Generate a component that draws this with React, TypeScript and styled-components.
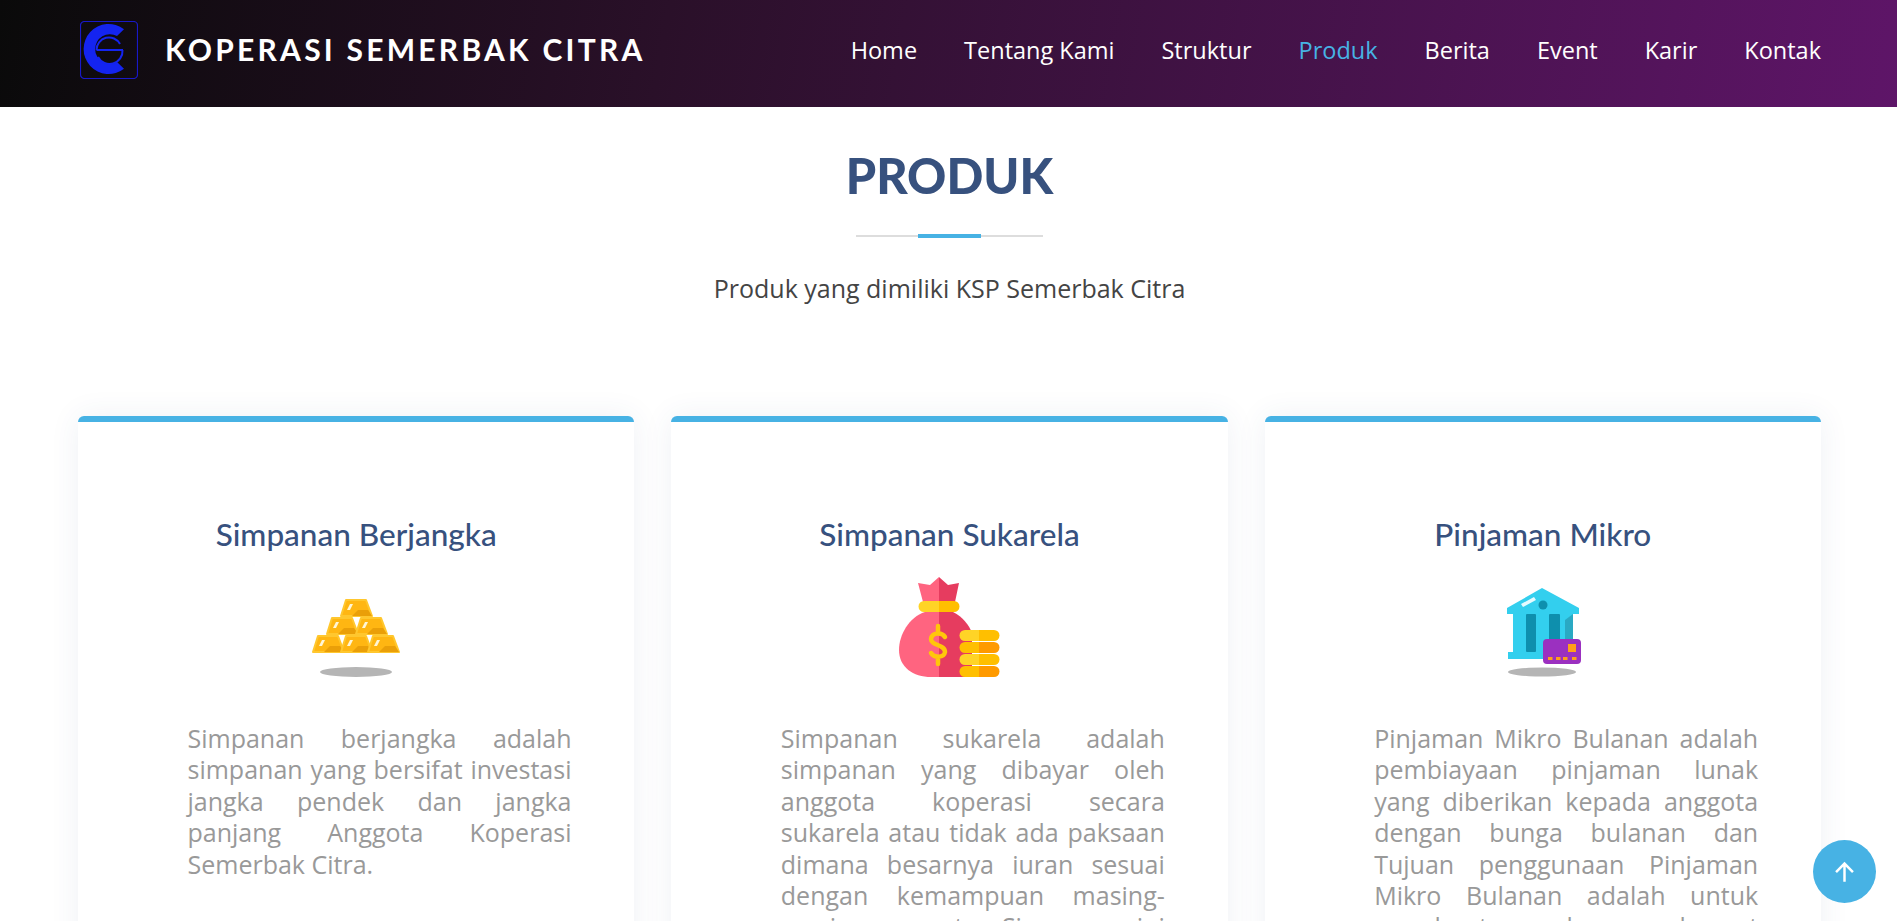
import React from 'react'
import styled, { createGlobalStyle } from 'styled-components'

const GlobalStyle = createGlobalStyle`
  html, body {
    margin: 0;
    padding: 0;
    height: 100%;
    overflow: hidden;
    background: #fff;
    font-family: "Open Sans", "Noto Sans", sans-serif;
  }
  * { box-sizing: border-box; }
`

const Header = styled.header`
  height: 107px;
  padding: 0 76px 8px 80px;
  display: flex;
  align-items: center;
  justify-content: space-between;
  background: linear-gradient(100deg, #0a0a0a 0%, #2a1029 35%, #5e1568 100%);
`

const Brand = styled.a`
  display: flex;
  align-items: center;
  gap: 27px;
`

const BrandName = styled.span`
  font-family: "Lato", sans-serif;
  font-size: 30px;
  line-height: 38px;
  font-weight: 700;
  letter-spacing: 3.25px;
  color: #fff;
  margin-top: -2px;
`

const Nav = styled.nav`
  display: flex;
  gap: 47px;
`

const NavLink = styled.a<{ $active?: boolean }>`
  font-size: 23.5px;
  font-weight: 400;
  color: ${p => (p.$active ? '#47b2e4' : '#fff')};
`

const Section = styled.section`
  padding: 38px 76px 0 78px;
`

const SectionTitle = styled.div`
  display: flex;
  flex-direction: column;
  align-items: center;
`

const Heading = styled.h2`
  margin: 0;
  font-family: "Lato", sans-serif;
  font-size: 48.5px;
  line-height: 60px;
  font-weight: 900;
  color: #37517e;
`

const Divider = styled.div`
  position: relative;
  width: 187px;
  height: 2px;
  margin-top: 30px;
  background: #ddd;

  &::after {
    content: '';
    position: absolute;
    left: 62px;
    top: -1px;
    width: 63px;
    height: 4px;
    background: #47b2e4;
  }
`

const Subtitle = styled.p`
  margin: 33px 0 0;
  font-size: 25px;
  line-height: 36px;
  color: #444;
`

const Grid = styled.div`
  display: grid;
  grid-template-columns: repeat(3, minmax(0, 1fr));
  gap: 37px;
  margin-top: 110px;
`

const Card = styled.article`
  display: flex;
  flex-direction: column;
  align-items: center;
  height: 640px;
  padding-top: 92px;
  background: #fff;
  border-top: 6px solid #47b2e4;
  border-radius: 6px;
  box-shadow: 0 0 30px rgba(55, 81, 126, 0.08);
`

const CardTitle = styled.h4`
  margin: 0;
  font-family: "Lato", sans-serif;
  font-size: 31.5px;
  line-height: 40px;
  font-weight: 500;
  color: #37517e;
  white-space: nowrap;
`

const IconWrap = styled.div`
  width: 130px;
  height: 115px;
  margin-top: 11px;
`

const CardText = styled.p`
  align-self: flex-start;
  width: 384px;
  margin: 43px 0 0 109.5px;
  font-size: 25px;
  line-height: 31.4px;
  text-align: justify;
  color: #999;
`

const BackToTop = styled.a`
  position: fixed;
  right: 21px;
  bottom: 18px;
  width: 63px;
  height: 63px;
  border-radius: 50%;
  display: flex;
  align-items: center;
  justify-content: center;
  background: #47b2e4;
`

const Logo = () => (
  <svg width="58" height="58" viewBox="0 0 58 58" fill="none">
    <rect x="0.5" y="0.5" width="57" height="57" rx="4" stroke="#1919c8" strokeWidth="1.2" />
    <path d="M44 8.3A25 25 0 1 0 44 47.7L37 41A14.8 14.8 0 1 1 37 15Z" fill="#1424f0" />
    <path d="M16.5 29H43M40 23A12.5 12.5 0 0 0 16.5 29M42.5 29A13 13 0 0 1 18 36" stroke="#1424f0" strokeWidth="2" />
  </svg>
)

const goldBars = [
  [50, 29],
  [36, 47],
  [65, 47],
  [22, 65],
  [50, 65],
  [77, 65],
]

const GoldIcon = () => (
  <svg width="130" height="115" viewBox="1 -5 130 115">
    <ellipse cx="66" cy="102" rx="36" ry="5" fill="#b5b5b5" />
    {goldBars.map(([x, y]) => (
      <g key={`${x}-${y}`}>
        <path d={`M${x + 6} ${y + 1}H${x + 26}L${x + 32} ${y + 17}H${x + 1}Z`} fill="#ffb612" stroke="#ffc72e" strokeWidth="2" strokeLinejoin="round" />
        <path d={`M${x + 12} ${y + 17}L${x + 18} ${y + 11}H${x + 28}L${x + 32} ${y + 17}Z`} fill="#ea9f08" />
        <path d={`M${x + 7} ${y + 11}L${x + 10} ${y + 5}H${x + 13}L${x + 10} ${y + 11}Z`} fill="#fff6d6" />
      </g>
    ))}
  </svg>
)

const BagIcon = () => (
  <svg width="130" height="115" viewBox="3 0 130 115">
    <path d="M58 47H44C28 52 18 70 18 85C18 102 32 112 50 112H58Z" fill="#ff6480" />
    <path d="M58 47H72C82 52 88 60 91 68V112H58Z" fill="#e63c5f" />
    <path d="M37 18L49 20L58 12V37H42Z" fill="#ff6480" />
    <path d="M78 18L67 20L58 12V37H74Z" fill="#e63c5f" />
    <path d="M43 36H58V47H43A5.5 5.5 0 0 1 43 36Z" fill="#ffd426" />
    <path d="M58 36H73A5.5 5.5 0 0 1 73 47H58Z" fill="#ffbf00" />
    <path d="M57 61V67M57 93V99M64 72C61 67 51 67 50 74C50 81 64 79 64 87C63 93 53 93 50 88" fill="none" stroke="#ffc60a" strokeWidth="4.5" strokeLinecap="round" />
    {[65, 77, 89, 101].map((y, i) => (
      <g key={y}>
        <path d={`M84 ${y}H98V${y + 11}H84A5.5 5.5 0 0 1 84 ${y}Z`} fill={i % 2 ? '#ffbf00' : '#ffd426'} />
        <path d={`M98 ${y}H113A5.5 5.5 0 0 1 113 ${y + 11}H98Z`} fill={i % 2 ? '#ff9a00' : '#ffbf00'} />
      </g>
    ))}
  </svg>
)

const BankIcon = () => (
  <svg width="130" height="115" viewBox="-2 -10 130 115">
    <ellipse cx="62" cy="97" rx="34" ry="4.5" fill="#b5b5b5" />
    <path d="M27 33L62 13L99 33V39H93V77H99V84H28V77H33V39H27Z" fill="#33cfee" strokeLinejoin="round" />
    <path d="M85 45L93 39V64H85Z" fill="#2aa9c3" />
    <path d="M41 29L54 22L56 25L43 32Z" fill="#e5fbff" />
    <circle cx="63" cy="30" r="4.5" fill="#0e8fad" />
    <rect x="46" y="39" width="10" height="38" rx="1" fill="#0e8fad" />
    <rect x="69" y="39" width="11" height="38" rx="1" fill="#0e8fad" />
    <rect x="63" y="64" width="38" height="25" rx="4" fill="#9b30c0" />
    <rect x="88" y="69" width="8" height="8" fill="#ff9f1a" />
    {[68, 76, 83, 92].map(x => (
      <rect key={x} x={x} y="82" width="4.5" height="3" fill="#ff9f1a" />
    ))}
  </svg>
)

const products = [
  {
    title: 'Simpanan Berjangka',
    icon: <GoldIcon />,
    text: 'Simpanan berjangka adalah simpanan yang bersifat investasi jangka pendek dan jangka panjang Anggota Koperasi Semerbak Citra.',
  },
  {
    title: 'Simpanan Sukarela',
    icon: <BagIcon />,
    text: 'Simpanan sukarela adalah simpanan yang dibayar oleh anggota koperasi secara sukarela atau tidak ada paksaan dimana besarnya iuran sesuai dengan kemampuan masing-masing anggota. Simpanan ini dapat diambil sewaktu-waktu oleh anggota koperasi.',
  },
  {
    title: 'Pinjaman Mikro',
    icon: <BankIcon />,
    text: 'Pinjaman Mikro Bulanan adalah pembiayaan pinjaman lunak yang diberikan kepada anggota dengan bunga bulanan dan Tujuan penggunaan Pinjaman Mikro Bulanan adalah untuk membantu dana darurat anggota koperasi yang membutuhkan.',
  },
]

const navItems = ['Home', 'Tentang Kami', 'Struktur', 'Produk', 'Berita', 'Event', 'Karir', 'Kontak']

const App = () => {
  return (
    <>
      <GlobalStyle />
      <Header>
        <Brand>
          <Logo />
          <BrandName>KOPERASI SEMERBAK CITRA</BrandName>
        </Brand>
        <Nav>
          {navItems.map(item => (
            <NavLink key={item} $active={item === 'Produk'}>
              {item}
            </NavLink>
          ))}
        </Nav>
      </Header>
      <Section>
        <SectionTitle>
          <Heading>PRODUK</Heading>
          <Divider />
          <Subtitle>Produk yang dimiliki KSP Semerbak Citra</Subtitle>
        </SectionTitle>
        <Grid>
          {products.map(p => (
            <Card key={p.title}>
              <CardTitle>{p.title}</CardTitle>
              <IconWrap>{p.icon}</IconWrap>
              <CardText>{p.text}</CardText>
            </Card>
          ))}
        </Grid>
      </Section>
      <BackToTop>
        <svg width="27" height="27" viewBox="0 0 24 24" fill="none" stroke="#fff" strokeWidth="2.2">
          <path d="M12 21V5M4.5 12.5L12 5L19.5 12.5" />
        </svg>
      </BackToTop>
    </>
  )
}

export default App
